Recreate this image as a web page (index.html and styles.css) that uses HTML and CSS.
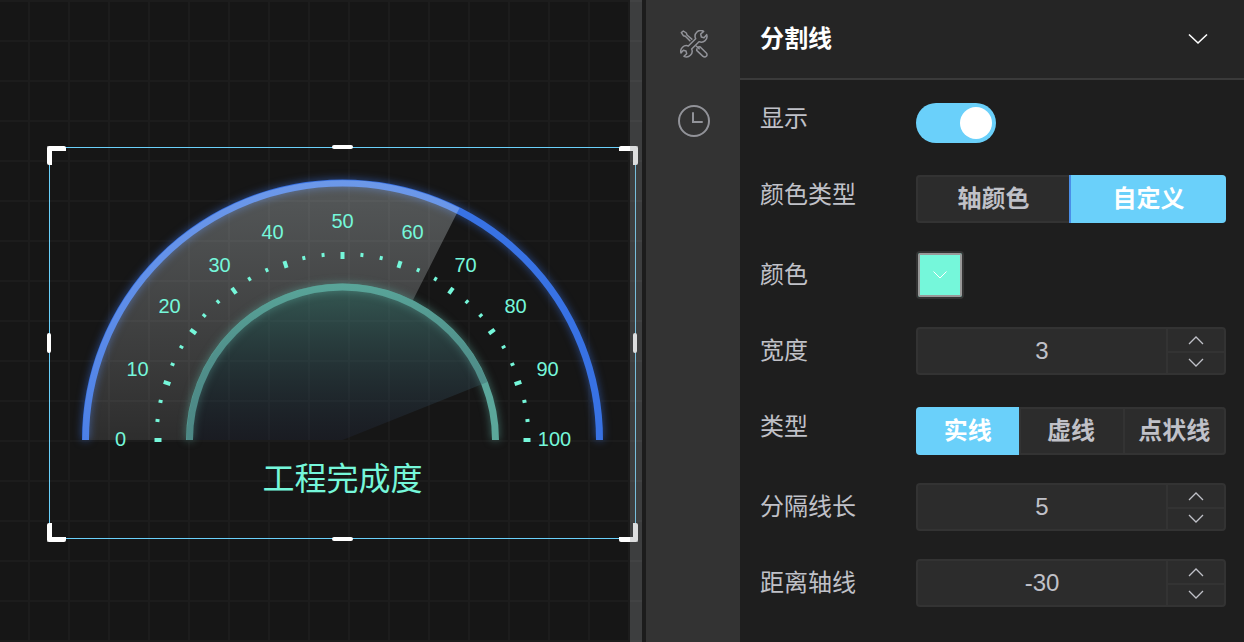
FILE: index.html
```html
<!DOCTYPE html>
<html lang="zh-CN">
<head>
<meta charset="utf-8">
<title>工程完成度</title>
<link rel="stylesheet" href="styles.css">
</head>
<body>
<main class="editor">
  <section class="canvas" aria-label="画布">
    <div class="widget">
      <svg class="gauge" viewBox="-293.5 -293 587 392" role="img" aria-label="工程完成度">
        <defs>
          <linearGradient id="outerFill" x1="0" y1="0" x2="0" y2="1">
            <stop offset="0" stop-color="#e6f2f6" stop-opacity=".3"/>
            <stop offset="1" stop-color="#fff" stop-opacity=".1"/>
          </linearGradient>
          <linearGradient id="innerFill" x1="0" y1="0" x2="0" y2="1">
            <stop offset="0" stop-color="#57a397" stop-opacity=".48"/>
            <stop offset="1" stop-color="#242c46" stop-opacity=".25"/>
          </linearGradient>
        </defs>
        <path class="ring ring-outer" d="M-257 0A257 257 0 0 1 257 0"/>
        <path fill="url(#outerFill)" d="M-260 0A260 260 0 0 1 117 -232L70 -139A156 156 0 0 0 -156 0Z"/>
        <path class="ring ring-inner" d="M-153 0A153 153 0 0 1 153 0"/>
        <path fill="url(#innerFill)" d="M-156 0A156 156 0 0 1 145 -58L0 0Z"/>
        <g id="ticks"></g>
        <g class="scale">
          <text x="-222" y="6">0</text>
          <text x="-205" y="-64">10</text>
          <text x="-173" y="-127">20</text>
          <text x="-123" y="-168">30</text>
          <text x="-70" y="-201">40</text>
          <text x="0" y="-212">50</text>
          <text x="70" y="-201">60</text>
          <text x="123" y="-168">70</text>
          <text x="173" y="-127">80</text>
          <text x="205" y="-64">90</text>
          <text x="212" y="6">100</text>
        </g>
        <text class="gauge-title" x="0" y="50">工程完成度</text>
      </svg>
      <i class="corner top left"></i><i class="corner top right"></i>
      <i class="corner bottom left"></i><i class="corner bottom right"></i>
      <i class="edge edge-top"></i><i class="edge edge-bottom"></i>
      <i class="edge edge-left"></i><i class="edge edge-right"></i>
    </div>
    <div class="scrollbar"></div>
  </section>

  <nav class="rail" aria-label="工具">
    <button class="rail-button" type="button" aria-label="设置">
      <svg width="28" height="28" viewBox="240 92 84 84" fill="none" stroke="currentColor" stroke-width="4.500" stroke-linejoin="round">
        <path d="M311 96L302 104L304 113L312 115L320 106A17 17 0 0 1 297 127L275 149A17 17 0 0 1 252 171L260 163L258 155L250 153L243 161A17 17 0 0 1 265 140L287 118A17 17 0 0 1 311 96Z"/>
        <path d="M277 121L261 107L259 101L250 95L244 100L250 109L256 111L271 126"/>
        <path d="M288 139L299 150M294 143L300 142L319 161A7 7 0 0 1 309 171L290 153L291 147"/>
      </svg>
    </button>
    <button class="rail-button" type="button" aria-label="历史">
      <svg width="32" height="32" viewBox="0 0 32 32" fill="none" stroke="currentColor" stroke-width="2" stroke-linecap="round">
        <circle cx="16" cy="16" r="15"/>
        <path d="M15 8V17H24"/>
      </svg>
    </button>
  </nav>

  <aside class="panel">
    <button class="panel-header" type="button">
      <span class="panel-title">分割线</span>
      <svg width="20" height="12" viewBox="0 0 20 12" fill="none" stroke="currentColor" stroke-width="1.6"><path d="M1 1.500L10 10L19 1.500"/></svg>
    </button>
    <form class="form">
      <div class="row">
        <label class="label" for="show">显示</label>
        <input class="switch" id="show" type="checkbox" checked>
      </div>
      <div class="row">
        <span class="label" id="colorTypeLabel">颜色类型</span>
        <div class="segments" role="radiogroup" aria-labelledby="colorTypeLabel">
          <label class="segment"><input type="radio" name="colorType"><span>轴颜色</span></label>
          <label class="segment"><input type="radio" name="colorType" checked><span>自定义</span></label>
        </div>
      </div>
      <div class="row">
        <label class="label" for="color">颜色</label>
        <button class="swatch" id="color" type="button">
          <svg width="14" height="8" viewBox="0 0 14 8" fill="none" stroke="currentColor"><path d="M.5 .5L7 7L13.500 .5"/></svg>
        </button>
      </div>
      <div class="row">
        <label class="label" for="width">宽度</label>
        <div class="number">
          <input id="width" type="text" inputmode="numeric" value="3">
          <div class="steps">
            <button type="button" aria-label="增加"><svg class="chevron" viewBox="0 0 16 10"><path d="M1 9L8 2L15 9"/></svg></button>
            <button type="button" aria-label="减少"><svg class="chevron" viewBox="0 0 16 10"><path d="M1 1L8 8L15 1"/></svg></button>
          </div>
        </div>
      </div>
      <div class="row">
        <span class="label" id="lineTypeLabel">类型</span>
        <div class="segments" role="radiogroup" aria-labelledby="lineTypeLabel">
          <label class="segment"><input type="radio" name="lineType" checked><span>实线</span></label>
          <label class="segment"><input type="radio" name="lineType"><span>虚线</span></label>
          <label class="segment"><input type="radio" name="lineType"><span>点状线</span></label>
        </div>
      </div>
      <div class="row">
        <label class="label" for="length">分隔线长</label>
        <div class="number">
          <input id="length" type="text" inputmode="numeric" value="5">
          <div class="steps">
            <button type="button" aria-label="增加"><svg class="chevron" viewBox="0 0 16 10"><path d="M1 9L8 2L15 9"/></svg></button>
            <button type="button" aria-label="减少"><svg class="chevron" viewBox="0 0 16 10"><path d="M1 1L8 8L15 1"/></svg></button>
          </div>
        </div>
      </div>
      <div class="row">
        <label class="label" for="distance">距离轴线</label>
        <div class="number">
          <input id="distance" type="text" inputmode="numeric" value="-30">
          <div class="steps">
            <button type="button" aria-label="增加"><svg class="chevron" viewBox="0 0 16 10"><path d="M1 9L8 2L15 9"/></svg></button>
            <button type="button" aria-label="减少"><svg class="chevron" viewBox="0 0 16 10"><path d="M1 1L8 8L15 1"/></svg></button>
          </div>
        </div>
      </div>
    </form>
  </aside>
</main>
<script src="ticks.js"></script>
</body>
</html>
```

FILE: ticks.js
```js
// Ten scale intervals, each divided by two minor ticks.
const ticks = document.getElementById('ticks');
for (let i = 0; i <= 30; i++) {
  const major = i % 3 === 0;
  const line = document.createElementNS('http://www.w3.org/2000/svg', 'line');
  line.setAttribute('x1', -188);
  line.setAttribute('x2', major ? -181 : -184);
  line.setAttribute('class', major ? 'tick tick-major' : 'tick');
  line.setAttribute('transform', `rotate(${i * 6})`);
  ticks.appendChild(line);
}
```

FILE: styles.css
```css
* { box-sizing: border-box; }

body {
  margin: 0;
  background: #1e1e1e;
  color: #c0c1c8;
  font-family: "Liberation Sans", "Noto Sans CJK SC", sans-serif;
  font-size: 24px;
}

button, input { font: inherit; color: inherit; }
button { padding: 0; border: 0; background: none; cursor: pointer; }

.editor {
  display: grid;
  grid-template-columns: minmax(0, 1fr) 94px 504px;
  min-height: 100vh;
}

/* Canvas */
.canvas {
  position: relative;
  overflow: hidden;
  background-color: #161616;
  background-image:
    linear-gradient(#1c1c1c 2px, transparent 2px),
    linear-gradient(90deg, #1c1c1c 2px, transparent 2px);
  background-size: 40px 40px;
  background-position: 28px 0;
}
.scrollbar {
  position: absolute;
  inset: 0 4px 0 auto;
  width: 12px;
  background: rgba(147, 148, 152, .32);
  box-shadow: 4px 0 #1c1c1c;
}

.widget {
  position: absolute;
  left: 49px;
  top: 147px;
  width: 587px;
  height: 392px;
  box-shadow: inset 0 0 0 1px #6ad0fa;
}
.gauge { display: block; width: 100%; height: 100%; }
.ring { fill: none; stroke-width: 7; }
.ring-outer { stroke: #3872e4; filter: drop-shadow(0 0 4px rgba(56, 114, 228, .6)); }
.ring-inner { stroke: #5ba79b; filter: drop-shadow(0 0 4px rgba(91, 167, 155, .6)); }
.tick { stroke: #75f7da; stroke-width: 3; }
.tick-major { stroke-width: 4; }
.scale { fill: #75f7da; font-size: 20px; text-anchor: middle; }
.gauge-title { fill: #75f7da; font-size: 32px; text-anchor: middle; }

.corner {
  position: absolute;
  width: 19px;
  height: 19px;
  border: 0 solid #fff;
  border-radius: 2px;
}
.top { top: -1px; border-top-width: 5px; }
.bottom { bottom: -3px; border-bottom-width: 5px; }
.left { left: -2px; border-left-width: 5px; }
.right { right: -2px; border-right-width: 5px; }

.edge { position: absolute; background: #fff; border-radius: 2px; }
.edge-top, .edge-bottom { left: 283px; width: 21px; height: 4px; }
.edge-left, .edge-right { top: 186px; width: 4px; height: 20px; }
.edge-top { top: -2px; }
.edge-bottom { bottom: -2px; }
.edge-left { left: -2px; }
.edge-right { right: -1px; }

/* Icon rail */
.rail {
  display: flex;
  flex-direction: column;
  align-items: center;
  gap: 45px;
  padding: 28px 0 0 2px;
  background: #333;
  color: #929399;
}
.rail-button { display: grid; place-items: center; width: 32px; height: 32px; }

/* Settings panel */
.panel-header {
  display: flex;
  align-items: center;
  justify-content: space-between;
  width: 100%;
  height: 80px;
  padding: 0 36px 0 20px;
  border-bottom: 2px solid #3a3a3a;
  background: #252525;
  color: #fff;
  font-weight: 700;
}
.panel-title { padding-bottom: 5px; }
.form {
  display: grid;
  gap: 28px;
  padding: 15px 18px 36px 20px;
}
.row {
  display: grid;
  grid-template-columns: 156px minmax(0, 1fr);
  align-items: start;
}
.label { line-height: 48px; }

.switch {
  appearance: none;
  width: 80px;
  height: 40px;
  margin: 8px 0 0;
  padding: 4px;
  border-radius: 20px;
  background: #3a3a3a;
}
.switch::before {
  content: "";
  display: block;
  width: 32px;
  height: 32px;
  border-radius: 50%;
  background: #fff;
}
.switch:checked { background: #6ad0fa; }
.switch:checked::before { margin-left: auto; }

.segments {
  display: flex;
  height: 48px;
  margin-top: 4px;
  border-radius: 4px;
  background: #2c2c2c;
  box-shadow: inset 0 0 0 2px #333;
  font-weight: 700;
}
.segment {
  position: relative;
  display: grid;
  place-items: center;
  flex: 1 1 0;
  padding-bottom: 5px;
  cursor: pointer;
}
.segment + .segment { box-shadow: inset 2px 0 #333; }
.segment input { position: absolute; opacity: 0; }
.segment:has(:checked) { background: #6ad0fa; color: #fff; }
.segment + .segment:has(:checked) { box-shadow: -2px 0 #4a8ee8; }
.segment:first-child { border-radius: 4px 0 0 4px; }
.segment:last-child { border-radius: 0 4px 4px 0; }

.swatch {
  display: grid;
  place-items: center;
  width: 48px;
  height: 48px;
  border: 2px solid #333;
  border-radius: 4px;
  background: #75f7da;
  box-shadow: inset 0 0 0 2px #999;
  color: #fff;
}

.number {
  display: flex;
  height: 48px;
  border: 2px solid #333;
  border-radius: 4px;
  background: #2c2c2c;
}
.number input {
  flex: 1;
  min-width: 0;
  padding: 0;
  border: 0;
  outline: 0;
  background: none;
  text-align: center;
}
.steps {
  display: grid;
  grid-template-rows: 1fr 1fr;
  width: 58px;
  border-left: 2px solid #333;
}
.steps button { display: grid; place-items: center; }
.steps button + button { border-top: 2px solid #333; }
.chevron { width: 16px; height: 10px; fill: none; stroke: currentColor; stroke-width: 1.3; }
```
